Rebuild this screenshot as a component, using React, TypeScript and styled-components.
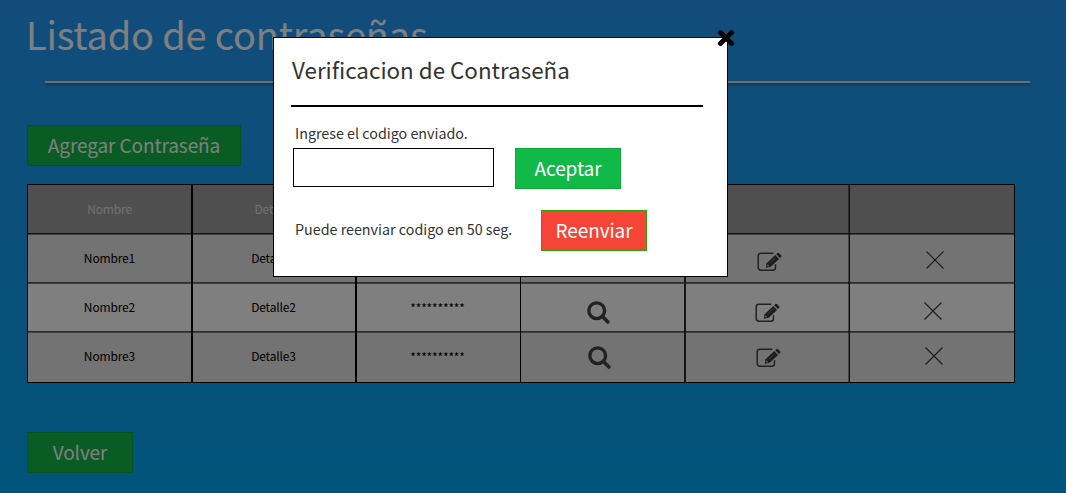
import React from "react";
import styled, { createGlobalStyle } from "styled-components";

const GlobalStyle = createGlobalStyle`
  * { box-sizing: border-box; }
  body {
    margin: 0;
    font-family: "Noto Sans CJK SC", "Noto Sans", sans-serif;
    overflow: hidden;
  }
`;

const Page = styled.main`
  position: relative;
  width: 1066px;
  height: 493px;
  overflow: hidden;
  padding: 0 27px;
  background: linear-gradient(#2599f5, #03a9f6);
`;

const PageTitle = styled.h1`
  margin: 0 0 0 -1px;
  height: 81px;
  font-size: 38px;
  font-weight: 400;
  letter-spacing: -0.22px;
  line-height: 67px;
  color: #fff;
  white-space: nowrap;
`;

const Divider = styled.hr`
  width: 985px;
  height: 2px;
  margin: 0 0 42px 18px;
  border: 0;
  background: #e2d9d3;
  box-shadow: 0 2px 3px rgba(0, 0, 0, 0.35);
`;

const Button = styled.button<{ $width?: number; $danger?: boolean }>`
  display: flex;
  align-items: center;
  justify-content: center;
  flex: none;
  width: ${(p) => p.$width ?? 106}px;
  height: 41px;
  padding: 0 0 2px;
  border: 1px solid ${(p) => (p.$danger ? "#26a80c" : "#0da83a")};
  background: ${(p) => (p.$danger ? "#f64437" : "#10b948")};
  color: #fff;
  font-family: inherit;
  font-size: 19px;
  letter-spacing: -0.1px;
  line-height: 37px;
  white-space: nowrap;
`;

const Table = styled.div`
  display: grid;
  grid-template-rows: 49px 49px 49px 50px;
  width: 988px;
  height: 199px;
  margin: 18px 0 49px;
  border: 1px solid #000;
`;

const Row = styled.div<{ $tone: string; $head?: boolean }>`
  display: grid;
  grid-template-columns: 165px 164px 164px 165px 164px 164px;
  background: ${(p) => p.$tone};
  color: ${(p) => (p.$head ? "#e2e2e2" : "#000")};
  font-size: 12px;
  letter-spacing: -0.15px;
  & + & { border-top: 1px solid #778188; }
  border-bottom: 1px solid ${(p) => (p.$head ? "#222b30" : "#58595a")};
  &:last-child { border-bottom: 0; }
`;

const dividers = {
  thick: "2px solid #000",
  thin: "1px solid #000",
  soft: "2px solid #2a2a2a",
  faint: "1px solid #1c1c1c",
};

const Cell = styled.div<{ $line?: keyof typeof dividers; $x?: number; $y?: number }>`
  display: flex;
  align-items: center;
  justify-content: center;
  margin: -1px 0;
  border-right: ${(p) => (p.$line ? dividers[p.$line] : "0")};
  box-shadow: ${(p) => (p.$line === "faint" ? "inset -1px 0 rgba(0, 0, 0, 0.4)" : "none")};
  padding-top: ${(p) => Math.max(p.$y ?? 0, 0) * 2}px;
  padding-bottom: ${(p) => Math.max(-(p.$y ?? 0), 0) * 2}px;
  padding-left: ${(p) => Math.max(p.$x ?? 0, 0) * 2}px;
  padding-right: ${(p) => Math.max(-(p.$x ?? 0), 0) * 2}px;
`;

const Icon = styled.svg`
  display: block;
  flex: none;
`;

const Overlay = styled.div`
  position: absolute;
  inset: 0;
  background: rgba(0, 0, 0, 0.5);
`;

const Dialog = styled.section`
  position: absolute;
  left: 273px;
  top: 37px;
  width: 455px;
  height: 240px;
  padding: 0 24px 0 17px;
  border: 1px solid #000;
  background: #fff;
  color: #333;
`;

const DialogTitle = styled.h2`
  height: 69px;
  margin: 0;
  padding: 0 0 2px 1px;
  border-bottom: 2px solid #000;
  font-size: 22.4px;
  font-weight: 400;
  line-height: 63px;
`;

const Label = styled.label`
  display: block;
  height: 41px;
  padding: 14px 0 0 4px;
  font-size: 14.3px;
  line-height: 24px;
`;

const FormRow = styled.div`
  display: flex;
  padding-left: 2px;
  gap: 21px;
`;

const CodeInput = styled.input`
  width: 201px;
  height: 39px;
  padding: 0 8px;
  border: 1px solid #000;
  border-radius: 0;
  background: #fff;
  font: inherit;
`;

const ResendRow = styled.div`
  display: flex;
  align-items: center;
  margin-top: 21px;
  padding-left: 4px;
`;

const Countdown = styled.span`
  width: 246px;
  font-size: 14.3px;
  line-height: 24px;
  padding-bottom: 4px;
`;

const CloseButton = styled.button`
  position: absolute;
  top: -9px;
  right: -8px;
  width: 18px;
  height: 18px;
  padding: 0;
  border: 0;
  background: none;
`;

const SearchIcon = () => (
  <Icon width="23" height="23" viewBox="0 0 23 23" fill="none" stroke="#444">
    <circle cx="9.7" cy="9.7" r="7.9" strokeWidth="3.3" />
    <path d="M15.5 15.5 20.9 20.9" strokeWidth="3.6" strokeLinecap="round" />
  </Icon>
);

const EditIcon = () => (
  <Icon width="25" height="20" viewBox="0 0 25 20">
    <path d="M16.3 1.3H4Q1.2 1.3 1.2 4v11.3Q1.2 18.3 4 18.3h11.7q2.8 0 2.8-2.8v-3.2" fill="none" stroke="#444" strokeWidth="1.5" />
    <path d="M8.8 15.8 9.6 11.2 18.3 3.1 22.1 7.1 13.4 15.1Z" fill="#3c3c3c" />
    <path d="m19.2 2.3 1.3-1.2q.8-.7 1.6.1l2.1 2.2q.7.8-.1 1.5l-1.3 1.2Z" fill="#3c3c3c" />
    <path d="m12.6 11.2 5.6-5.2" stroke="#909090" strokeWidth=".6" />
    <path d="m10.4 13 1.4 1.4" stroke="#d0d0d0" strokeWidth="1.2" />
  </Icon>
);

const DeleteIcon = () => (
  <Icon width="18" height="18" viewBox="0 0 18 18">
    <path d="m.5.5 17 17m0-17-17 17" stroke="#3a3a3a" strokeWidth="1.1" />
  </Icon>
);

const CloseIcon = () => (
  <Icon width="18" height="18" viewBox="0 0 18 18">
    <path d="m3.4 3.6 11.2 10.8m0-10.8-11.2 10.8" stroke="#000" strokeWidth="4.9" strokeLinecap="round" />
  </Icon>
);

const entries = [
  { id: 1, tone: "#e6e6e6", x: 1, y: 3, text: -1 },
  { id: 2, tone: "#ffffff", x: -1, y: 5, text: -1 },
  { id: 3, tone: "#e6e6e6", x: 0, y: 0, text: -2 },
];

export default function App() {
  return (
    <>
      <GlobalStyle />
      <Page>
        <PageTitle>Listado de contraseñas</PageTitle>
        <Divider />
        <Button $width={214}>Agregar Contraseña</Button>
        <Table>
          <Row $tone="#9e9e9e" $head>
            <Cell $line="thick" $y={-1}>Nombre</Cell>
            <Cell $line="thick" $x={-0.5} $y={-1}>Detalle</Cell>
            <Cell $line="thin" $y={-1}>Contraseña</Cell>
            <Cell $line="soft" />
            <Cell $line="faint" />
            <Cell />
          </Row>
          {entries.map(({ id, tone, x, y, text }) => (
            <Row key={id} $tone={tone}>
              <Cell $line="thick" $y={text}>Nombre{id}</Cell>
              <Cell $line="thick" $x={-0.5} $y={text}>Detalle{id}</Cell>
              <Cell $line="thin" $x={-1} $y={text + 0.5}>**********</Cell>
              <Cell $line="soft" $x={x - 3} $y={y - 0.5}><SearchIcon /></Cell>
              <Cell $line="faint" $x={x + 1} $y={y}><EditIcon /></Cell>
              <Cell $x={x + 2} $y={y - 1.5}><DeleteIcon /></Cell>
            </Row>
          ))}
        </Table>
        <Button>Volver</Button>
        <Overlay />
        <Dialog>
          <CloseButton aria-label="Cerrar"><CloseIcon /></CloseButton>
          <DialogTitle>Verificacion de Contraseña</DialogTitle>
          <Label htmlFor="codigo">Ingrese el codigo enviado.</Label>
          <FormRow>
            <CodeInput id="codigo" />
            <Button>Aceptar</Button>
          </FormRow>
          <ResendRow>
            <Countdown>Puede reenviar codigo en 50 seg.</Countdown>
            <Button $danger>Reenviar</Button>
          </ResendRow>
        </Dialog>
      </Page>
    </>
  );
}
